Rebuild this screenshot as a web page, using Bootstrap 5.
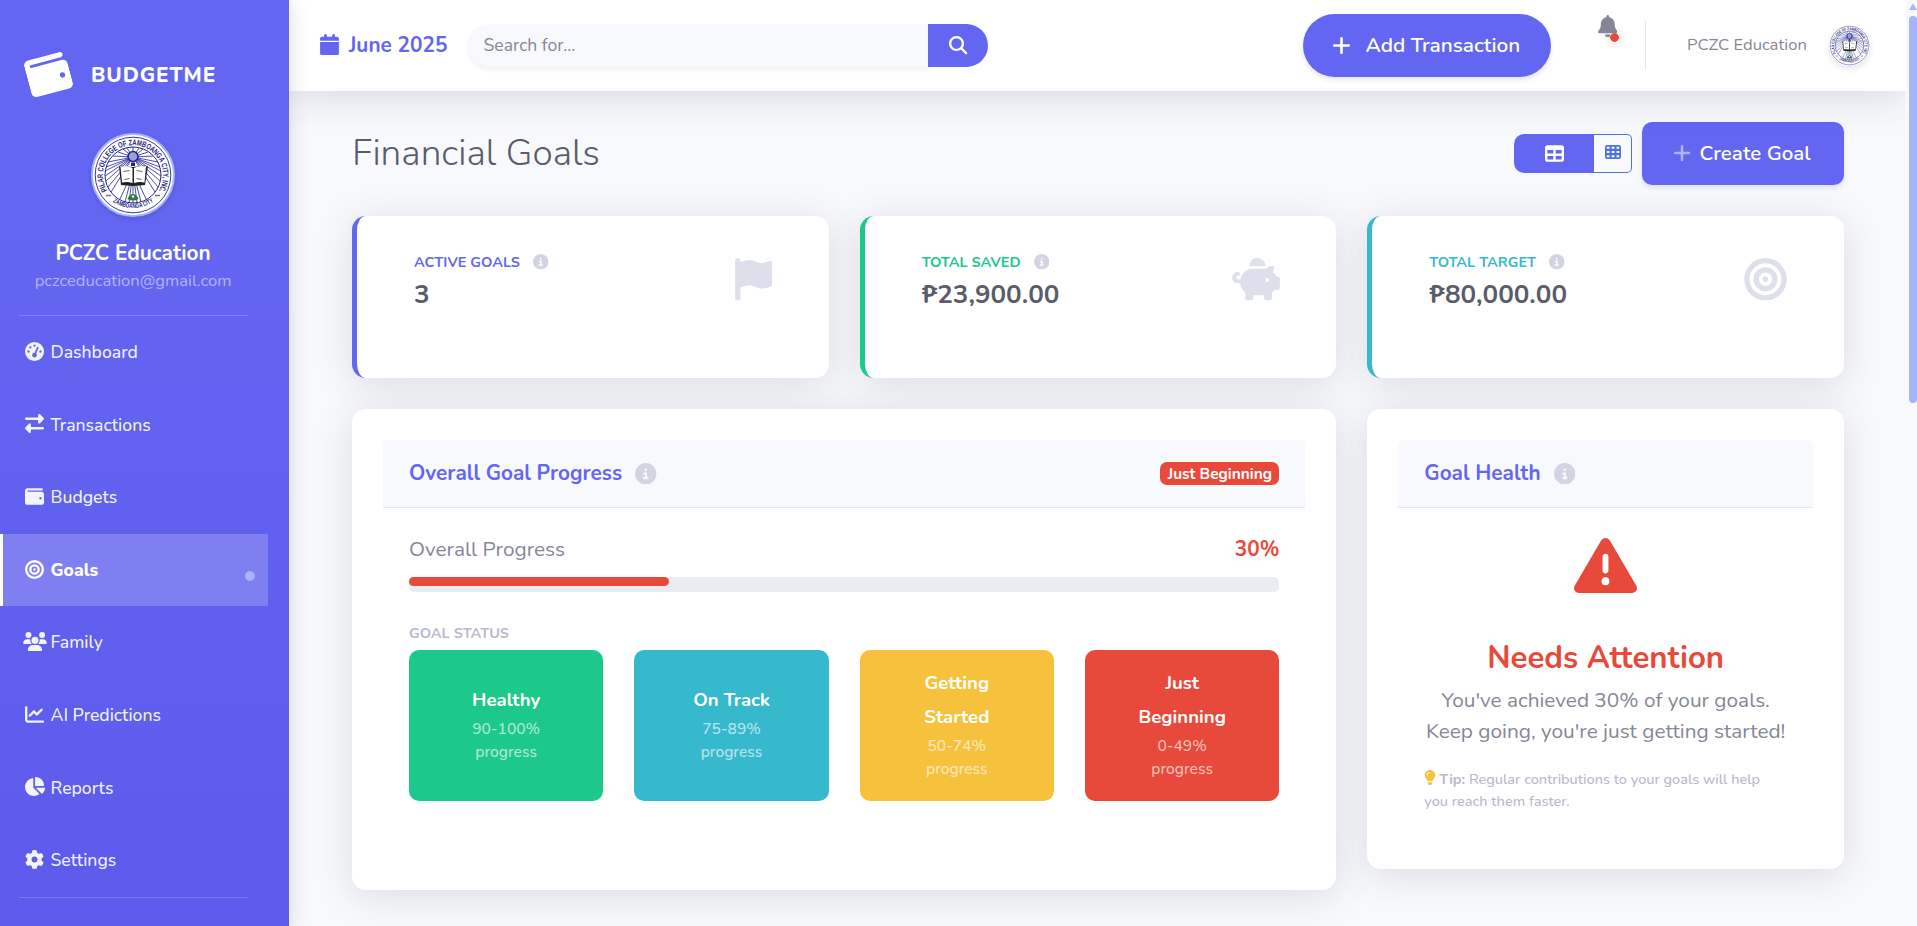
<!DOCTYPE html>
<html lang="en">
<head>
<meta charset="utf-8">
<title>BudgetMe - Financial Goals</title>
<link href="https://cdn.jsdelivr.net/npm/bootstrap@5.3.0/dist/css/bootstrap.min.css" rel="stylesheet">
<style>
:root{--ind:#6366f1;--grn:#1cc88a;--teal:#36b9cc;--yel:#f6c23e;--red:#e74a3b}
body{font-family:Nunito,Lato,"Open Sans",sans-serif;background:#f8f9fd;color:#858796;height:926px;overflow:hidden;white-space:nowrap}
svg{fill:currentColor;flex:none;display:block}
.side{width:289px;background:linear-gradient(180deg,#6366f1 0,#6366f1 24%,#5d5aec 100%);box-shadow:0 3px 20px rgba(30,30,60,.16);z-index:3;color:#fff}
.side-in{width:268px}
.brand{height:133px;padding:17px 0 0 27px}
.brand svg{transform:rotate(-15deg);margin-top:-1px}
.brand span{font-size:20.8px;font-weight:800;letter-spacing:.9px;margin-left:21px;line-height:30px}
.seal-lg{width:84px;height:84px;border:2px solid #a5b4fc;border-radius:50%;background:#fff;box-shadow:0 2px 5px rgba(0,0,0,.12);margin-right:2px}
.uname{font-size:20.8px;font-weight:700;line-height:30px;margin-top:20.5px;padding-right:2px}
.umail{font-size:16.6px;line-height:26px;color:rgba(255,255,255,.5);padding-right:2px}
.rule{height:1px;margin:0 20px 0 19px;background:rgba(255,255,255,.18)}
.umail+.rule{margin-top:21.5px}
.nav-i{height:72.6px;padding-left:25px;font-size:17.6px;color:rgba(255,255,255,.93);position:relative;font-weight:500}
.nav-i svg{width:19px;height:19px;margin-right:6.5px;margin-top:-2px}
.nav-i svg.wide{width:24px;margin-left:-2.5px;margin-right:4px}
.nav-i.on{background:rgba(255,255,255,.2);border-left:3px solid #fff;padding-left:22px;font-weight:800;color:#fff}
.nav-i.on i{position:absolute;right:13px;top:37px;width:10px;height:10px;border-radius:50%;background:#a5b4fc}
.top{height:91px;background:#fff;box-shadow:0 6px 38px rgba(58,59,69,.16);padding-left:31px;z-index:2}
.date{font-size:20.8px;font-weight:700;color:var(--ind);width:147.5px}
.date svg{margin-right:10px;margin-top:-2px}
.search{width:520.5px;height:43px}
.search .form-control{border:0;background:#f8f9fc;border-radius:22px 0 0 22px;font-size:17.6px;padding:0 0 0 16px;box-shadow:0 3px 5px rgba(0,0,0,.06)}
.search .form-control::placeholder{color:#858796;opacity:1}
.search .btn{width:60px;background:var(--ind);border:0;border-radius:0 22px 22px 0;color:#fff;padding:0 0 0 21px}
.btn-x{background:var(--ind);color:#fff;height:63px;font-size:20.8px;font-weight:600;box-shadow:0 3px 5px rgba(0,0,0,.1);display:flex;align-items:center}
.add{width:248px;border-radius:32px;padding-left:29px}
.add svg{margin-right:14.5px}
.bellw{position:relative;margin-left:46.5px;margin-top:-39px}
.bellw i{position:absolute;left:6.5px;top:12.5px;width:21px;height:21px;border-radius:50%;background:radial-gradient(circle,#e74a3b 0 4px,rgba(231,74,59,.06) 4.6px)}
.vline{width:1px;height:49px;background:#e3e6f0;margin:0 41px 0 28px}
.pname{font-size:16.6px;width:142px}
.seal-sm{width:41px;height:41px;border-radius:50%;box-shadow:0 3px 6px rgba(0,0,0,.1);margin-right:36px}
.body-in{padding:31px 62px 0 63px}
.ttl{font-size:37px;font-weight:300;color:#5a5c69;margin:0;line-height:62px;height:63px}
.tog{height:39px;width:118px;margin-right:10px}
.tog div{display:flex;align-items:center;justify-content:center}
.tog .a{width:80px;background:var(--ind);color:#fff;border-radius:10px 0 0 10px}
.tog .b{width:38px;border:1px solid #4e73df;border-left:0;color:#4e73df;border-radius:0 5px 5px 0;padding-bottom:3px}
.mk{width:202px;border-radius:10px;padding-left:30.5px;font-size:20.5px}
.mk svg{margin-top:-2px;margin-right:9px}
.grid3{--bs-gutter-x:31px;--bs-gutter-y:0;padding-top:31px}
.grid3>*{margin-bottom:31px}
.panel{background:#fff;border-radius:14px;box-shadow:0 6px 38px rgba(58,59,69,.15)}
.wide-p{height:480.5px;padding:31px}
.slim-p{height:459.5px;padding:31px}
.stat{height:162px;border-left:5px solid;padding:35px 56.5px 0 57px}
.stat.i{border-color:var(--ind)}.stat.g{border-color:var(--grn)}.stat.t{border-color:var(--teal)}
.i .lab{color:var(--ind)}.g .lab{color:var(--grn)}.t .lab{color:var(--teal)}
.lab{font-size:14.5px;font-weight:700;line-height:22px}
.info{color:#d2d3e3;margin-left:13px}
.val{font-size:26px;font-weight:700;line-height:32px;margin-top:5.5px;color:#5a5c69}
.sico{color:#dddfeb;margin-top:7px}
.hd{height:68px;background:#f8f9fd;border-bottom:1px solid #e3e6f0;border-radius:5px 5px 0 0;padding:0 26px}
.hd b{font-size:20.8px;font-weight:700;color:var(--ind)}
.pill{background:var(--red);color:#fff;font-size:15.4px;font-weight:700;width:119px;height:22.5px;line-height:23px;border-radius:7px;text-align:center}
.prog{padding:26px 26px 0}
.op{font-size:20.8px;line-height:31px}
.op b{color:var(--red);font-weight:700}
.track{height:15.5px;border-radius:5px;background:#eaecf4;margin-top:11.5px}
.fillb{height:9.7px;border-radius:5px;background:var(--red)}
.gs{color:#b7b9cc;font-weight:700;font-size:14.5px;line-height:22px;margin:30px 0 5.5px}
.boxes{--bs-gutter-x:31px}
.box{height:151px;border-radius:10px;color:#fff;padding-bottom:1px;text-align:center}
.box b{font-size:18.6px;line-height:33.7px;font-weight:700}
.box span{font-size:15.6px;line-height:23.7px;color:rgba(255,255,255,.65);font-weight:500}
.health{padding-top:26px;text-align:center}
.na{font-size:31.2px;font-weight:700;color:var(--red);line-height:37px;margin-top:41.5px}
.msg{font-size:20.8px;line-height:31px;margin-top:9.5px}
.tip{font-size:14.5px;line-height:22px;margin-top:20.5px;color:#b7b9cc;font-weight:500;padding-left:26px;text-align:left}
.tip svg{display:inline-block;color:var(--yel);margin:-4px 3px 0 0}
.sb{width:11px;background:#f8f9fc;z-index:3;padding-left:3px;color:#a5b4fc}
.sb .th{height:387px;border-radius:4px;background:#a5b4fc;margin-top:6px}
.defs{position:absolute}
</style>
</head>
<body class="d-flex">
<svg class="defs" width="0" height="0">
<symbol id="wallet" viewBox="0 0 512 512"><path d="M64 32C28.7 32 0 60.7 0 96V416c0 35.3 28.7 64 64 64H448c35.3 0 64-28.7 64-64V192c0-35.3-28.7-64-64-64H80c-8.8 0-16-7.2-16-16s7.2-16 16-16H448c17.7 0 32-14.3 32-32s-14.3-32-32-32H64zM416 272a32 32 0 1 1 0 64 32 32 0 1 1 0-64z"/></symbol>
<symbol id="gauge" viewBox="0 0 512 512"><path d="M0 256a256 256 0 1 1 512 0A256 256 0 1 1 0 256zM288 96a32 32 0 1 0 -64 0 32 32 0 1 0 64 0zM256 416c35.3 0 64-28.7 64-64c0-17.4-6.9-33.1-18.1-44.6L366 161.7c5.3-12.1-.2-26.3-12.3-31.6s-26.3 .2-31.6 12.3L257.9 288c-.6 0-1.3 0-1.9 0c-35.3 0-64 28.7-64 64s28.7 64 64 64zM176 144a32 32 0 1 0 -64 0 32 32 0 1 0 64 0zM96 288a32 32 0 1 0 0-64 32 32 0 1 0 0 64zm352-32a32 32 0 1 0 -64 0 32 32 0 1 0 64 0z"/></symbol>
<symbol id="swap" viewBox="0 0 512 512"><path d="M32 96l320 0V32c0-12.9 7.8-24.6 19.8-29.6s25.7-2.2 34.9 6.9l96 96c6 6 9.4 14.1 9.4 22.6s-3.4 16.6-9.4 22.6l-96 96c-9.2 9.2-22.9 11.9-34.9 6.9s-19.8-16.6-19.8-29.6V160L32 160c-17.7 0-32-14.3-32-32s14.3-32 32-32zM480 352c17.7 0 32 14.3 32 32s-14.3 32-32 32H160v64c0 12.9-7.8 24.6-19.8 29.6s-25.7 2.2-34.9-6.9l-96-96c-6-6-9.4-14.1-9.4-22.6s3.4-16.6 9.4-22.6l96-96c9.2-9.2 22.9-11.9 34.9-6.9s19.8 16.6 19.8 29.6l0 64H480z"/></symbol>
<symbol id="bull" viewBox="0 0 512 512"><path d="M448 256A192 192 0 1 0 64 256a192 192 0 1 0 384 0zM0 256a256 256 0 1 1 512 0A256 256 0 1 1 0 256zm256 80a80 80 0 1 0 0-160 80 80 0 1 0 0 160zm0-224a144 144 0 1 1 0 288 144 144 0 1 1 0-288zM224 256a32 32 0 1 1 64 0 32 32 0 1 1 -64 0z"/></symbol>
<symbol id="users" viewBox="0 0 640 512"><path d="M144 0a80 80 0 1 1 0 160A80 80 0 1 1 144 0zM512 0a80 80 0 1 1 0 160A80 80 0 1 1 512 0zM0 298.7C0 239.8 47.8 192 106.7 192h42.7c15.9 0 31 3.5 44.6 9.7c-1.3 7.2-1.9 14.7-1.9 22.3c0 38.2 16.8 72.5 43.3 96c-.2 0-.4 0-.7 0H21.3C9.6 320 0 310.4 0 298.7zM405.3 320c-.2 0-.4 0-.7 0c26.6-23.5 43.3-57.8 43.3-96c0-7.6-.7-15-1.9-22.3c13.6-6.3 28.7-9.7 44.6-9.7h42.7C592.2 192 640 239.8 640 298.7c0 11.8-9.6 21.3-21.3 21.3H405.3zM224 224a96 96 0 1 1 192 0 96 96 0 1 1 -192 0zM128 485.3C128 411.7 187.7 352 261.3 352H378.7C452.3 352 512 411.7 512 485.3c0 14.7-11.9 26.7-26.7 26.7H154.7c-14.7 0-26.7-11.9-26.7-26.7z"/></symbol>
<symbol id="line" viewBox="0 0 512 512"><path d="M64 64c0-17.7-14.3-32-32-32S0 46.3 0 64V400c0 44.2 35.8 80 80 80H480c17.7 0 32-14.3 32-32s-14.3-32-32-32H80c-8.8 0-16-7.2-16-16V64zm406.6 86.6c12.5-12.5 12.5-32.8 0-45.3s-32.8-12.5-45.3 0L320 210.7l-57.4-57.4c-12.5-12.5-32.8-12.5-45.3 0l-112 112c-12.5 12.5-12.5 32.8 0 45.3s32.8 12.5 45.3 0L240 221.3l57.4 57.4c12.5 12.5 32.8 12.5 45.3 0l128-128z"/></symbol>
<symbol id="pie" viewBox="20 0 556 512"><path d="M304 240V16.6c0-9 7-16.6 16-16.6C443.7 0 544 100.3 544 224c0 9-7.6 16-16.6 16H304zM32 272C32 150.7 122.1 50.3 239 34.3c9.2-1.3 17 6.1 17 15.4V288L412.5 444.5c6.7 6.7 6.2 17.7-1.5 23.1C371.8 495.6 323.8 512 272 512C139.5 512 32 404.6 32 272zm526.4 16c9.3 0 16.6 7.8 15.4 17c-7.7 55.9-34.6 105.6-73.9 142.3c-6 5.6-15.4 5.2-21.2-.7L320 288H558.4z"/></symbol>
<symbol id="gear" viewBox="0 0 512 512"><path d="M495.9 166.6c3.2 8.7 .5 18.4-6.4 24.6l-43.3 39.4c1.1 8.3 1.7 16.8 1.7 25.4s-.6 17.1-1.7 25.4l43.3 39.4c6.9 6.2 9.6 15.9 6.4 24.6c-4.4 11.9-9.7 23.3-15.8 34.3l-4.7 8.1c-6.6 11-14 21.4-22.1 31.2c-5.9 7.2-15.7 9.6-24.5 6.8l-55.7-17.7c-13.4 10.3-28.2 18.9-44 25.4l-12.5 57.1c-2 9.1-9 16.3-18.2 17.8c-13.8 2.3-28 3.5-42.5 3.5s-28.7-1.2-42.5-3.5c-9.2-1.5-16.2-8.7-18.2-17.8l-12.5-57.1c-15.8-6.5-30.6-15.1-44-25.4L83.1 425.9c-8.8 2.8-18.6 .3-24.5-6.8c-8.1-9.8-15.5-20.2-22.1-31.2l-4.7-8.1c-6.1-11-11.4-22.4-15.8-34.3c-3.2-8.7-.5-18.4 6.4-24.6l43.3-39.4C64.6 273.1 64 264.6 64 256s.6-17.1 1.7-25.4L22.4 191.2c-6.9-6.2-9.6-15.9-6.4-24.6c4.4-11.9 9.7-23.3 15.8-34.3l4.7-8.1c6.6-11 14-21.4 22.1-31.2c5.9-7.2 15.7-9.6 24.5-6.8l55.7 17.7c13.4-10.3 28.2-18.9 44-25.4l12.5-57.1c2-9.1 9-16.3 18.2-17.8C227.3 1.2 241.5 0 256 0s28.7 1.2 42.5 3.5c9.2 1.5 16.2 8.7 18.2 17.8l12.5 57.1c15.8 6.5 30.6 15.1 44 25.4l55.7-17.7c8.8-2.8 18.6-.3 24.5 6.8c8.1 9.8 15.5 20.2 22.1 31.2l4.7 8.1c6.1 11 11.4 22.4 15.8 34.3zM256 336a80 80 0 1 0 0-160 80 80 0 1 0 0 160z"/></symbol>
<symbol id="cal" viewBox="0 0 448 512"><path d="M96 32V64H48C21.5 64 0 85.5 0 112v48H448V112c0-26.5-21.5-48-48-48H352V32c0-17.7-14.3-32-32-32s-32 14.3-32 32V64H160V32c0-17.7-14.3-32-32-32S96 14.3 96 32zM448 192H0V464c0 26.5 21.5 48 48 48H400c26.5 0 48-21.5 48-48V192z"/></symbol>
<symbol id="find" viewBox="0 0 512 512"><path d="M416 208c0 45.9-14.9 88.3-40 122.7L502.6 457.4c12.5 12.5 12.5 32.8 0 45.3s-32.8 12.5-45.3 0L330.7 376c-34.4 25.2-76.8 40-122.7 40C93.1 416 0 322.9 0 208S93.1 0 208 0S416 93.1 416 208zM208 352a144 144 0 1 0 0-288 144 144 0 1 0 0 288z"/></symbol>
<symbol id="plus" viewBox="0 0 448 512"><path d="M256 80c0-17.7-14.3-32-32-32s-32 14.3-32 32V224H48c-17.7 0-32 14.3-32 32s14.3 32 32 32H192V432c0 17.7 14.3 32 32 32s32-14.3 32-32V288H400c17.7 0 32-14.3 32-32s-14.3-32-32-32H256V80z"/></symbol>
<symbol id="bell" viewBox="0 0 448 512"><path d="M224 0c-17.7 0-32 14.3-32 32V51.2C119 66 64 130.6 64 208v18.8c0 47-17.3 92.4-48.5 127.6l-7.4 8.3c-8.4 9.4-10.4 22.9-5.3 34.4S19.4 416 32 416H416c12.6 0 24-7.4 29.2-18.9s3.1-25-5.3-34.4l-7.4-8.3C401.3 319.2 384 273.9 384 226.8V208c0-77.4-55-142-128-156.8V32c0-17.7-14.3-32-32-32zm45.3 493.3c12-12 18.7-28.3 18.7-45.3H224 160c0 17 6.7 33.3 18.7 45.3s28.3 18.7 45.3 18.7s33.3-6.7 45.3-18.7z"/></symbol>
<symbol id="tbl" viewBox="0 0 512 512"><path d="M64 256V160H224v96H64zm0 64H224v96H64V320zm224 96V320H448v96H288zM448 256H288V160H448v96zM64 32C28.7 32 0 60.7 0 96V416c0 35.3 28.7 64 64 64H448c35.3 0 64-28.7 64-64V96c0-35.3-28.7-64-64-64H64z"/></symbol>
<symbol id="cells" viewBox="0 0 512 512"><path fill-rule="evenodd" d="M64 32H448a64 64 0 0 1 64 64V416a64 64 0 0 1-64 64H64a64 64 0 0 1-64-64V96a64 64 0 0 1 64-64zM56 88v64h88V88zM212 88v64h88V88zM368 88v64h88V88zM56 224v64h88v-64zM212 224v64h88v-64zM368 224v64h88v-64zM56 360v64h88v-64zM212 360v64h88v-64zM368 360v64h88v-64z"/></symbol>
<symbol id="flag" viewBox="0 0 448 512"><path d="M64 32C64 14.3 49.7 0 32 0S0 14.3 0 32V64 368 480c0 17.7 14.3 32 32 32s32-14.3 32-32V352l64.3-16.1c41.1-10.3 84.6-5.5 122.5 13.4c44.2 22.1 95.5 24.8 141.7 7.4l34.7-13c12.5-4.7 20.8-16.6 20.8-30V66.1c0-23-24.2-38-44.8-27.7l-9.6 4.8c-46.3 23.2-100.8 23.2-147.1 0c-35.1-17.6-75.4-22-113.5-12.5L64 48V32z"/></symbol>
<symbol id="pig" viewBox="0 0 576 512"><path d="M400 96l0 .7c-5.3-.4-10.6-.7-16-.7H256c-16.5 0-32.5 2.1-47.8 6c-.1-2-.2-4-.2-6c0-53 43-96 96-96s96 43 96 96zm-16 32c3.5 0 7 .1 10.4 .3c4.2 .3 8.4 .7 12.6 1.3C424.6 109.1 450.8 96 480 96h11.5c10.4 0 18 9.8 15.5 19.9l-13.8 55.2c15.8 14.8 28.7 32.8 37.5 52.9H544c17.7 0 32 14.3 32 32v96c0 17.7-14.3 32-32 32H512c-9.1 12.1-19.9 22.9-32 32v64c0 17.7-14.3 32-32 32H416c-17.7 0-32-14.3-32-32V448H256v32c0 17.7-14.3 32-32 32H192c-17.7 0-32-14.3-32-32V416c-34.9-26.2-58.7-66.3-63.2-112H68c-37.6 0-68-30.4-68-68s30.4-68 68-68h4c13.3 0 24 10.7 24 24s-10.7 24-24 24H68c-11 0-20 9-20 20s9 20 20 20H99.2c12.1-59.8 57.7-107.5 116.3-122.8c12.9-3.4 26.5-5.2 40.5-5.2H384zm64 136a24 24 0 1 0 -48 0 24 24 0 1 0 48 0z"/></symbol>
<symbol id="inf" viewBox="0 0 512 512"><path d="M256 512A256 256 0 1 0 256 0a256 256 0 1 0 0 512zM216 336h24V272H216c-13.3 0-24-10.7-24-24s10.7-24 24-24h48c13.3 0 24 10.7 24 24v88h8c13.3 0 24 10.7 24 24s-10.7 24-24 24H216c-13.3 0-24-10.7-24-24s10.7-24 24-24zm40-208a32 32 0 1 1 0 64 32 32 0 1 1 0-64z"/></symbol>
<symbol id="warn" viewBox="0 0 512 512"><path d="M256 32c14.2 0 27.3 7.5 34.5 19.8l216 368c7.3 12.4 7.3 27.7 .2 40.1S486.3 480 472 480H40c-14.3 0-27.6-7.7-34.7-20.1s-7-27.8 .2-40.1l216-368C228.7 39.5 241.8 32 256 32zm0 128c-13.3 0-24 10.7-24 24V296c0 13.3 10.7 24 24 24s24-10.7 24-24V184c0-13.3-10.7-24-24-24zm32 224a32 32 0 1 0 -64 0 32 32 0 1 0 64 0z"/></symbol>
<symbol id="bulb" viewBox="0 0 384 512"><path d="M272 384c9.6-31.9 29.5-59.1 49.2-86.2c5.2-7.1 10.4-14.2 15.4-21.4c19.8-28.5 31.4-63 31.4-100.3C368 78.8 289.2 0 192 0S16 78.8 16 176c0 37.3 11.6 71.9 31.4 100.3c5 7.2 10.2 14.3 15.4 21.4c19.8 27.1 39.7 54.4 49.2 86.2H272zM192 512c44.2 0 80-35.8 80-80V416H112v16c0 44.2 35.8 80 80 80zM112 176c0 8.8-7.2 16-16 16s-16-7.2-16-16c0-61.9 50.1-112 112-112c8.8 0 16 7.2 16 16s-7.2 16-16 16c-44.2 0-80 35.8-80 80z"/></symbol>
</svg>

<nav class="side flex-shrink-0"><div class="side-in d-flex flex-column">
<div class="brand d-flex align-items-center"><svg width="43" height="43"><use href="#wallet"/></svg><span>BUDGETME</span></div>
<svg class="seal-lg align-self-center" viewBox="0 0 80 80"><g id="seal">
<circle cx="40" cy="40" r="40" fill="#fff"/>
<g fill="none" stroke="#23238e"><circle cx="40" cy="40" r="37.8" stroke-width=".9"/><circle cx="40" cy="40" r="28" stroke-width="1"/>
<path stroke-width=".8" d="M40 22L15 27M40 22L13 32M40 22L12 36M40 22L12 41M40 22L13 46M40 22L15 52M40 22L18 57M40 22L65 27M40 22L67 32M40 22L68 36M40 22L68 41M40 22L67 46M40 22L65 52M40 22L62 57M40 22L30 14M40 22L25 17M40 22L20 21M40 22L34 13M40 22V12M40 22L46 13M40 22L50 14M40 22L55 17M40 22L60 21M38 40L27 64M39 40L32 67M39.5 40L36 68M40 40V68M40.5 40L44 68M41 40L48 67M42 40L53 64"/></g>
<path id="arcA" fill="none" d="M14.2 55.5A30 30 0 1 1 65.8 55.5"/><path id="arcB" fill="none" d="M17.5 65A35.6 35.6 0 0 0 62.5 65"/>
<text fill="#1d1d80" font-size="8" font-weight="700" font-family="Liberation Sans Narrow, Liberation Sans, sans-serif"><textPath href="#arcA" textLength="126" lengthAdjust="spacingAndGlyphs">PILAR COLLEGE OF ZAMBOANGA CITY, INC.</textPath></text>
<text fill="#1d1d80" font-size="6.4" font-weight="700" font-family="Liberation Sans Narrow, Liberation Sans, sans-serif"><textPath href="#arcB" startOffset="3" textLength="43" lengthAdjust="spacingAndGlyphs">ZAMBOANGA CITY</textPath></text>
<circle cx="40" cy="21.5" r="5" fill="#9aa0dd" stroke="#23238e" stroke-width="1.6"/><path d="M38 27.5h4v3.5h-4z" fill="#23238e"/>
<path d="M26 31l2 19 12 1 12-1 3-19-3 1v-1.5l-12 1.5-12-1.5v1.5z" fill="#222"/><path d="M27.5 31.5q7-1.5 12 1.5V48q-5-1.5-10.5-.5zM53 31.5q-7-1.5-12 1.5V48q5-1.5 10.5-.5z" fill="#fff"/><path d="M30.5 36.5l6-1M43.5 35.5l6 1M31.5 44.5l5-1M43.5 43.5l5 1" stroke="#555" stroke-width=".9"/>
<path d="M34.5 64q2-5 5.500-5t5.500 5q-5.500 3-11 0" fill="#2c7a3a"/><circle cx="40" cy="61.5" r="1.3" fill="#fff"/><path d="M13 60.5h5M62 60.5h5" stroke="#776" stroke-width="1.4"/>
</g></svg>
<div class="uname text-center">PCZC Education</div>
<div class="umail text-center">pczceducation@gmail.com</div>
<div class="rule"></div>
<div class="nav-i d-flex align-items-center"><svg><use href="#gauge"/></svg><span>Dashboard</span></div>
<div class="nav-i d-flex align-items-center"><svg><use href="#swap"/></svg><span>Transactions</span></div>
<div class="nav-i d-flex align-items-center"><svg><use href="#wallet"/></svg><span>Budgets</span></div>
<div class="nav-i on d-flex align-items-center"><svg><use href="#bull"/></svg><span>Goals</span><i></i></div>
<div class="nav-i d-flex align-items-center"><svg class="wide"><use href="#users"/></svg><span>Family</span></div>
<div class="nav-i d-flex align-items-center"><svg><use href="#line"/></svg><span>AI Predictions</span></div>
<div class="nav-i d-flex align-items-center"><svg viewBox="32 0 512 512" overflow="visible"><use href="#pie" x="20" width="556" height="512"/></svg><span>Reports</span></div>
<div class="nav-i d-flex align-items-center"><svg><use href="#gear"/></svg><span>Settings</span></div>
<div class="rule"></div>
</div></nav>

<div class="flex-grow-1 d-flex flex-column">
<header class="top d-flex align-items-center">
<div class="date d-flex align-items-center"><svg width="19" height="21.5"><use href="#cal"/></svg><span>June 2025</span></div>
<div class="search input-group flex-nowrap"><input class="form-control" placeholder="Search for..."><button class="btn"><svg width="18.5" height="18.5"><use href="#find"/></svg></button></div>
<div class="btn-x add ms-auto"><svg width="19" height="21"><use href="#plus"/></svg><span>Add Transaction</span></div>
<div class="bellw"><svg width="19.5" height="22.5"><use href="#bell"/></svg><i></i></div>
<div class="vline"></div>
<div class="pname">PCZC Education</div>
<svg class="seal-sm" viewBox="0 0 80 80"><use href="#seal"/></svg>
</header>
<main class="body-in">
<div class="d-flex align-items-center">
<h1 class="ttl me-auto">Financial Goals</h1>
<div class="tog d-flex"><div class="a"><svg width="19" height="19"><use href="#tbl"/></svg></div><div class="b"><svg width="16" height="16"><use href="#cells"/></svg></div></div>
<div class="btn-x mk"><svg width="18" height="20" class="opacity-50"><use href="#plus"/></svg><span>Create Goal</span></div>
</div>
<div class="row grid3">
<div class="col-4"><div class="panel stat i d-flex justify-content-between"><div><div class="lab d-flex align-items-center"><span>ACTIVE GOALS</span><svg class="info" width="15.5" height="15.5"><use href="#inf"/></svg></div><div class="val">3</div></div><svg class="sico" width="37.5" height="42.5"><use href="#flag"/></svg></div></div>
<div class="col-4"><div class="panel stat g d-flex justify-content-between"><div><div class="lab d-flex align-items-center"><span>TOTAL SAVED</span><svg class="info" width="15.5" height="15.5"><use href="#inf"/></svg></div><div class="val">₱23,900.00</div></div><svg class="sico" width="48" height="42.5"><use href="#pig"/></svg></div></div>
<div class="col-4"><div class="panel stat t d-flex justify-content-between"><div><div class="lab d-flex align-items-center"><span>TOTAL TARGET</span><svg class="info" width="15.5" height="15.5"><use href="#inf"/></svg></div><div class="val">₱80,000.00</div></div><svg class="sico" width="43" height="42.5"><use href="#bull"/></svg></div></div>
<div class="col-8"><div class="panel wide-p">
<div class="hd d-flex align-items-center"><b>Overall Goal Progress</b><svg class="info" width="21.5" height="21.5"><use href="#inf"/></svg><div class="pill ms-auto">Just Beginning</div></div>
<div class="prog">
<div class="op d-flex justify-content-between"><span>Overall Progress</span><b>30%</b></div>
<div class="track"><div class="fillb" style="width:29.9%"></div></div>
<div class="gs">GOAL STATUS</div>
<div class="row boxes">
<div class="col-3"><div class="box d-flex flex-column justify-content-center" style="background:var(--grn)"><b>Healthy</b><span>90-100%<br>progress</span></div></div>
<div class="col-3"><div class="box d-flex flex-column justify-content-center" style="background:var(--teal)"><b>On Track</b><span>75-89%<br>progress</span></div></div>
<div class="col-3"><div class="box d-flex flex-column justify-content-center" style="background:var(--yel)"><b>Getting<br>Started</b><span>50-74%<br>progress</span></div></div>
<div class="col-3"><div class="box d-flex flex-column justify-content-center" style="background:var(--red)"><b>Just<br>Beginning</b><span>0-49%<br>progress</span></div></div>
</div></div></div></div>
<div class="col-4"><div class="panel slim-p">
<div class="hd d-flex align-items-center"><b>Goal Health</b><svg class="info" width="21.5" height="21.5"><use href="#inf"/></svg></div>
<div class="health">
<svg width="63" height="63" class="mx-auto text-danger-x" style="color:var(--red)"><use href="#warn"/></svg>
<div class="na">Needs Attention</div>
<div class="msg">You've achieved 30% of your goals.<br>Keep going, you're just getting started!</div>
<div class="tip"><svg width="12" height="15"><use href="#bulb"/></svg><b>Tip:</b> Regular contributions to your goals will help<br>you reach them faster.</div>
</div></div></div>
</div>
</main>
</div>
<div class="sb flex-shrink-0"><svg width="8" height="10" viewBox="0 0 8 10"><path d="M4 3.5l4 6.500H0z"/></svg><div class="th"></div></div>
<script src="https://cdn.jsdelivr.net/npm/bootstrap@5.3.0/dist/js/bootstrap.bundle.min.js"></script>
</body></html>
